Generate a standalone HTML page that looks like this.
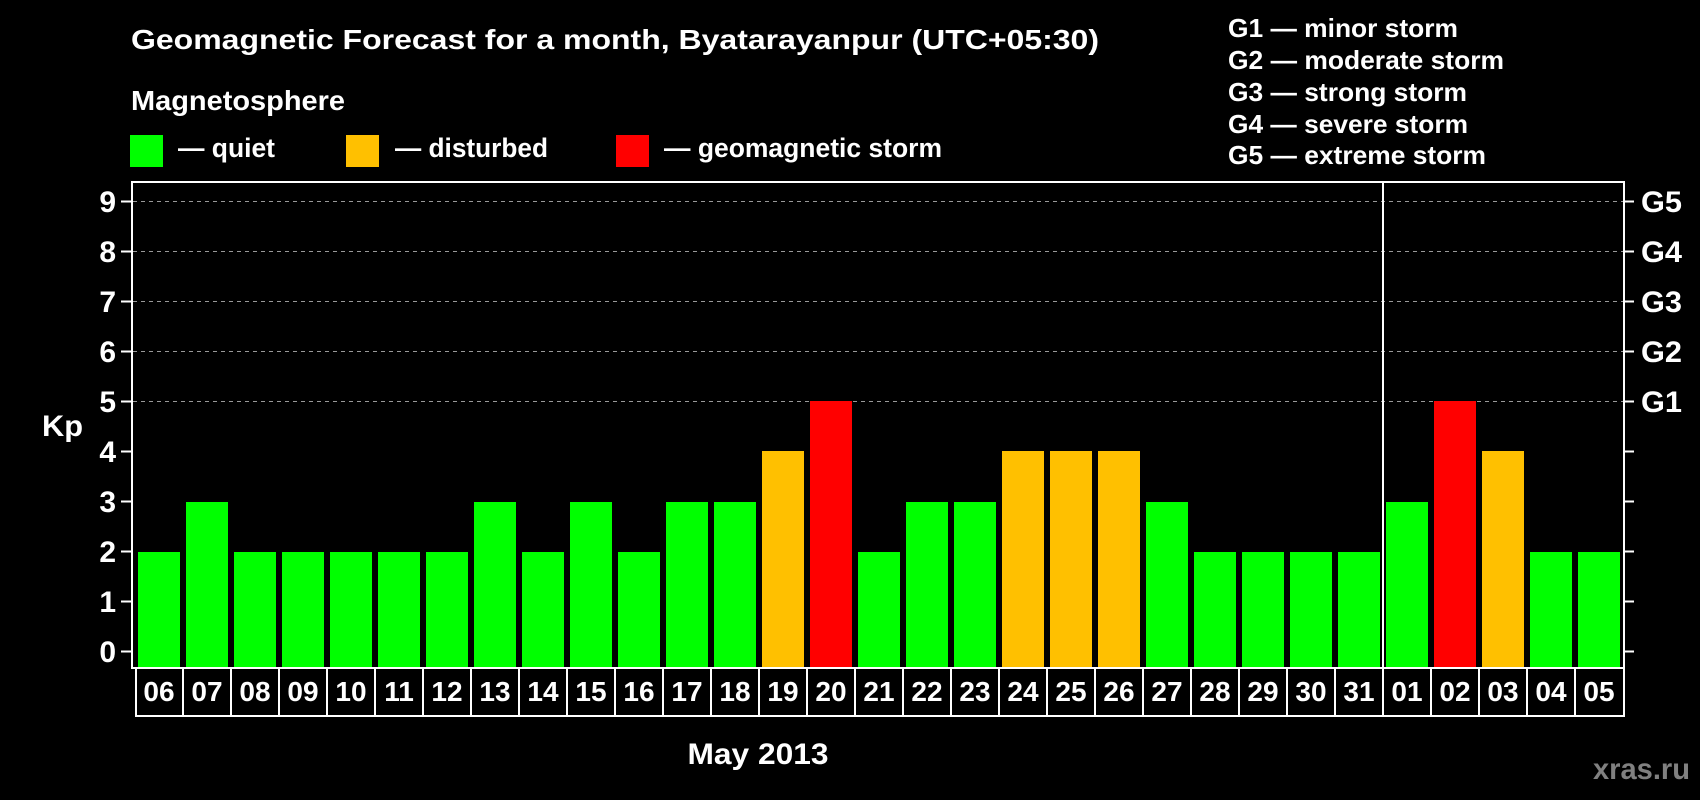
<!DOCTYPE html>
<html><head><meta charset="utf-8"><style>
html,body{margin:0;padding:0;background:#000;width:1700px;height:800px;overflow:hidden}
svg{display:block}
text{font-family:"Liberation Sans",Arial,sans-serif;font-weight:bold;fill:#fff}
</style></head><body>
<svg width="1700" height="800" viewBox="0 0 1700 800" xmlns="http://www.w3.org/2000/svg">
<rect width="1700" height="800" fill="#000"/>
<text x="131" y="49" font-size="28" textLength="968" lengthAdjust="spacingAndGlyphs">Geomagnetic Forecast for a month, Byatarayanpur (UTC+05:30)</text>
<text x="131" y="110" font-size="28" textLength="214" lengthAdjust="spacingAndGlyphs">Magnetosphere</text>
<rect x="130" y="135" width="33" height="32" fill="#00ff00"/>
<rect x="346" y="135" width="33" height="32" fill="#ffc000"/>
<rect x="616" y="135" width="33" height="32" fill="#ff0000"/>
<text x="178" y="157" font-size="27" textLength="97" lengthAdjust="spacingAndGlyphs">— quiet</text>
<text x="395" y="157" font-size="27" textLength="153" lengthAdjust="spacingAndGlyphs">— disturbed</text>
<text x="664" y="157" font-size="27" textLength="278" lengthAdjust="spacingAndGlyphs">— geomagnetic storm</text>
<g font-size="26">
<text x="1228" y="37" textLength="230" lengthAdjust="spacingAndGlyphs">G1 — minor storm</text>
<text x="1228" y="69" textLength="276" lengthAdjust="spacingAndGlyphs">G2 — moderate storm</text>
<text x="1228" y="101" textLength="239" lengthAdjust="spacingAndGlyphs">G3 — strong storm</text>
<text x="1228" y="133" textLength="240" lengthAdjust="spacingAndGlyphs">G4 — severe storm</text>
<text x="1228" y="164" textLength="258" lengthAdjust="spacingAndGlyphs">G5 — extreme storm</text>
</g>
<g stroke="#999" stroke-width="1" stroke-dasharray="4,4">
<line x1="133" y1="201.5" x2="1623" y2="201.5"/>
<line x1="133" y1="251.5" x2="1623" y2="251.5"/>
<line x1="133" y1="301.5" x2="1623" y2="301.5"/>
<line x1="133" y1="351.5" x2="1623" y2="351.5"/>
<line x1="133" y1="401.5" x2="1623" y2="401.5"/>
</g>
<g>
<rect x="138" y="552" width="42" height="115" fill="#00ff00"/>
<rect x="186" y="502" width="42" height="165" fill="#00ff00"/>
<rect x="234" y="552" width="42" height="115" fill="#00ff00"/>
<rect x="282" y="552" width="42" height="115" fill="#00ff00"/>
<rect x="330" y="552" width="42" height="115" fill="#00ff00"/>
<rect x="378" y="552" width="42" height="115" fill="#00ff00"/>
<rect x="426" y="552" width="42" height="115" fill="#00ff00"/>
<rect x="474" y="502" width="42" height="165" fill="#00ff00"/>
<rect x="522" y="552" width="42" height="115" fill="#00ff00"/>
<rect x="570" y="502" width="42" height="165" fill="#00ff00"/>
<rect x="618" y="552" width="42" height="115" fill="#00ff00"/>
<rect x="666" y="502" width="42" height="165" fill="#00ff00"/>
<rect x="714" y="502" width="42" height="165" fill="#00ff00"/>
<rect x="762" y="451" width="42" height="216" fill="#ffc000"/>
<rect x="810" y="401" width="42" height="266" fill="#ff0000"/>
<rect x="858" y="552" width="42" height="115" fill="#00ff00"/>
<rect x="906" y="502" width="42" height="165" fill="#00ff00"/>
<rect x="954" y="502" width="42" height="165" fill="#00ff00"/>
<rect x="1002" y="451" width="42" height="216" fill="#ffc000"/>
<rect x="1050" y="451" width="42" height="216" fill="#ffc000"/>
<rect x="1098" y="451" width="42" height="216" fill="#ffc000"/>
<rect x="1146" y="502" width="42" height="165" fill="#00ff00"/>
<rect x="1194" y="552" width="42" height="115" fill="#00ff00"/>
<rect x="1242" y="552" width="42" height="115" fill="#00ff00"/>
<rect x="1290" y="552" width="42" height="115" fill="#00ff00"/>
<rect x="1338" y="552" width="42" height="115" fill="#00ff00"/>
<rect x="1386" y="502" width="42" height="165" fill="#00ff00"/>
<rect x="1434" y="401" width="42" height="266" fill="#ff0000"/>
<rect x="1482" y="451" width="42" height="216" fill="#ffc000"/>
<rect x="1530" y="552" width="42" height="115" fill="#00ff00"/>
<rect x="1578" y="552" width="42" height="115" fill="#00ff00"/>
</g>
<rect x="132" y="182" width="1492" height="486" fill="none" stroke="#fff" stroke-width="2"/>
<line x1="1383" y1="182" x2="1383" y2="716" stroke="#fff" stroke-width="2"/>
<g stroke="#fff" stroke-width="2">
<line x1="121" y1="201.5" x2="131" y2="201.5"/><line x1="121" y1="251.5" x2="131" y2="251.5"/>
<line x1="121" y1="301.5" x2="131" y2="301.5"/><line x1="121" y1="351.5" x2="131" y2="351.5"/>
<line x1="121" y1="401.5" x2="131" y2="401.5"/><line x1="121" y1="451.5" x2="131" y2="451.5"/>
<line x1="121" y1="501.5" x2="131" y2="501.5"/><line x1="121" y1="551.5" x2="131" y2="551.5"/>
<line x1="121" y1="601.5" x2="131" y2="601.5"/><line x1="121" y1="651.5" x2="131" y2="651.5"/>
<line x1="1624" y1="201.5" x2="1634" y2="201.5"/><line x1="1624" y1="251.5" x2="1634" y2="251.5"/>
<line x1="1624" y1="301.5" x2="1634" y2="301.5"/><line x1="1624" y1="351.5" x2="1634" y2="351.5"/>
<line x1="1624" y1="401.5" x2="1634" y2="401.5"/><line x1="1624" y1="451.5" x2="1634" y2="451.5"/>
<line x1="1624" y1="501.5" x2="1634" y2="501.5"/><line x1="1624" y1="551.5" x2="1634" y2="551.5"/>
<line x1="1624" y1="601.5" x2="1634" y2="601.5"/><line x1="1624" y1="651.5" x2="1634" y2="651.5"/>
</g>
<g font-size="30" text-anchor="end">
<text x="116" y="212">9</text><text x="116" y="262">8</text><text x="116" y="312">7</text>
<text x="116" y="362">6</text><text x="116" y="412">5</text><text x="116" y="462">4</text>
<text x="116" y="512">3</text><text x="116" y="562">2</text><text x="116" y="612">1</text>
<text x="116" y="662">0</text>
</g>
<text x="42" y="436" font-size="30" textLength="41" lengthAdjust="spacingAndGlyphs">Kp</text>
<g font-size="30">
<text x="1641" y="212" textLength="41" lengthAdjust="spacingAndGlyphs">G5</text><text x="1641" y="262" textLength="41" lengthAdjust="spacingAndGlyphs">G4</text><text x="1641" y="312" textLength="41" lengthAdjust="spacingAndGlyphs">G3</text>
<text x="1641" y="362" textLength="41" lengthAdjust="spacingAndGlyphs">G2</text><text x="1641" y="412" textLength="41" lengthAdjust="spacingAndGlyphs">G1</text>
</g>
<g fill="none" stroke="#fff" stroke-width="2">
<rect x="136" y="668" width="1488" height="48"/>
<path d="M183 668V716M231 668V716M279 668V716M327 668V716M375 668V716M423 668V716M471 668V716M519 668V716M567 668V716M615 668V716M663 668V716M711 668V716M759 668V716M807 668V716M855 668V716M903 668V716M951 668V716M999 668V716M1047 668V716M1095 668V716M1143 668V716M1191 668V716M1239 668V716M1287 668V716M1335 668V716M1431 668V716M1479 668V716M1527 668V716M1575 668V716"/>
</g>
<g font-size="28" text-anchor="middle">
<text x="159" y="701">06</text><text x="207" y="701">07</text><text x="255" y="701">08</text>
<text x="303" y="701">09</text><text x="351" y="701">10</text><text x="399" y="701">11</text>
<text x="447" y="701">12</text><text x="495" y="701">13</text><text x="543" y="701">14</text>
<text x="591" y="701">15</text><text x="639" y="701">16</text><text x="687" y="701">17</text>
<text x="735" y="701">18</text><text x="783" y="701">19</text><text x="831" y="701">20</text>
<text x="879" y="701">21</text><text x="927" y="701">22</text><text x="975" y="701">23</text>
<text x="1023" y="701">24</text><text x="1071" y="701">25</text><text x="1119" y="701">26</text>
<text x="1167" y="701">27</text><text x="1215" y="701">28</text><text x="1263" y="701">29</text>
<text x="1311" y="701">30</text><text x="1359" y="701">31</text><text x="1407" y="701">01</text>
<text x="1455" y="701">02</text><text x="1503" y="701">03</text><text x="1551" y="701">04</text>
<text x="1599" y="701">05</text>
</g>
<text x="758" y="764" font-size="30" text-anchor="middle" textLength="141" lengthAdjust="spacingAndGlyphs">May 2013</text>
<text x="1593" y="779" font-size="30" style="fill:#808080" textLength="97" lengthAdjust="spacingAndGlyphs">xras.ru</text>
</svg>
</body></html>
